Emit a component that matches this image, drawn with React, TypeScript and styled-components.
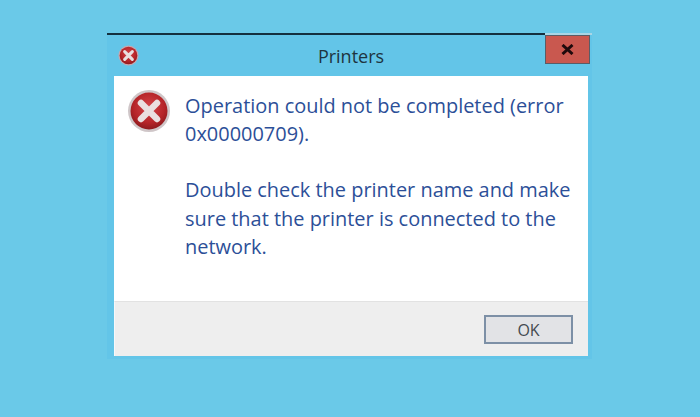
import React from "react";
import styled, { createGlobalStyle } from "styled-components";

const GlobalStyle = createGlobalStyle`
  html, body {
    margin: 0;
    padding: 0;
    background: #6ac9e8;
  }
`;

const Page = styled.div`
  width: 700px;
  height: 417px;
  box-sizing: border-box;
  padding: 33px 0 0 107px;
  background: #6ac9e8;
  overflow: hidden;
  font-family: "Open Sans", "Noto Sans", sans-serif;
`;

const Dialog = styled.div`
  width: 485px;
  display: flex;
  flex-direction: column;
  padding: 0 4px 3px 7px;
  box-sizing: border-box;
  background: #63c5e8;
`;

const TitleBar = styled.div`
  position: relative;
  height: 43px;
  margin: 0 -4px 0 -7px;
  border-top: 2px solid #a9d6e6;
  box-sizing: border-box;
  display: grid;
  grid-template-columns: 1fr auto 1fr;
  align-items: center;
  padding-left: 11px;

  &::before {
    content: "";
    position: absolute;
    top: -2px;
    left: 0;
    width: 438px;
    height: 2px;
    background: #14303f;
  }
`;

const Title = styled.div`
  font-size: 18px;
  color: #1e3440;
  padding-right: 8px;
`;

const CloseButton = styled.button`
  position: absolute;
  top: 0;
  left: 438px;
  width: 45px;
  height: 29px;
  padding: 0;
  box-sizing: border-box;
  background: #c9584f;
  border: 1px solid #5a5c66;
  display: flex;
  align-items: center;
  justify-content: center;
`;

const Body = styled.div`
  height: 225px;
  background: #fff;
  box-sizing: border-box;
  padding: 13px 0 0 13px;
  display: flex;
  gap: 14px;
  align-items: flex-start;
`;

const IconSlot = styled.div`
  flex: none;
  display: flex;
`;

const Message = styled.div`
  width: 395px;
  margin-top: 3px;
  font-size: 19.95px;
  line-height: 28.2px;
  color: #2c4f98;
`;

const Paragraph = styled.p`
  margin: 0 0 28px;
`;

const Footer = styled.div`
  height: 55px;
  background: #eeeeee;
  border-top: 1px solid #e2e2e2;
  border-left: 1px solid #f6f8fa;
  box-sizing: border-box;
  display: flex;
  justify-content: flex-end;
  padding: 13px 15px 0 0;
`;

const OkButton = styled.button`
  width: 89px;
  height: 29px;
  padding: 0;
  box-sizing: border-box;
  background: #e2e3e6;
  border: 2px solid #7d90a6;
  font-family: inherit;
  font-size: 16px;
  font-weight: 500;
  color: #444a50;
`;

const ErrorIcon = ({ size, ring }: { size: number; ring: string }) => (
  <svg width={size} height={size} viewBox="0 0 44 44">
    <defs>
      <radialGradient id={`red${size}`} cx="50%" cy="40%" r="60%">
        <stop offset="0%" stopColor="#d6444a" />
        <stop offset="70%" stopColor="#b52428" />
        <stop offset="100%" stopColor="#8e1a1e" />
      </radialGradient>
    </defs>
    <circle cx="22" cy="22" r="21" fill={ring} />
    <circle cx="22" cy="22" r="18.5" fill={`url(#red${size})`} />
    <path d="M14 14 L30 30 M30 14 L14 30" stroke="#eadfe0" strokeWidth="6.5" strokeLinecap="round" />
  </svg>
);

const CloseGlyph = () => (
  <svg width="13" height="11" viewBox="0 0 13 11">
    <path d="M1.5 1 L11.5 10 M11.5 1 L1.5 10" stroke="#1f0a0c" strokeWidth="3" />
  </svg>
);

const App: React.FC = () => (
  <Page>
    <GlobalStyle />
    <Dialog>
      <TitleBar>
        <ErrorIcon size={21} ring="#c9a5ad" />
        <Title>Printers</Title>
        <CloseButton>
          <CloseGlyph />
        </CloseButton>
      </TitleBar>
      <Body>
        <IconSlot>
          <ErrorIcon size={44} ring="#cfc6c8" />
        </IconSlot>
        <Message>
          <Paragraph>Operation could not be completed (error 0x00000709).</Paragraph>
          <Paragraph>Double check the printer name and make sure that the printer is connected to the network.</Paragraph>
        </Message>
      </Body>
      <Footer>
        <OkButton>OK</OkButton>
      </Footer>
    </Dialog>
  </Page>
);

export default App;
